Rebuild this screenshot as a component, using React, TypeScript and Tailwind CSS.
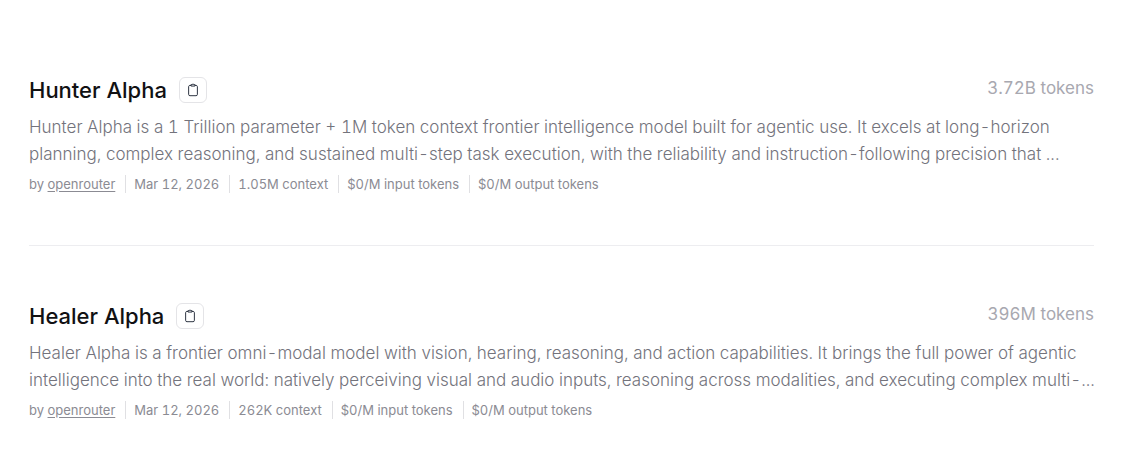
import { HiOutlineClipboard } from 'react-icons/hi2'

interface Model {
	name: string
	slug: string
	usage: string
	description: string
	date: string
	specs: string[]
}

const models: Model[] = [
	{
		name: 'Hunter Alpha',
		slug: 'hunter-alpha',
		usage: '3.72B tokens',
		description:
			'Hunter Alpha is a 1 Trillion parameter + 1M token context frontier intelligence model built for agentic use. It excels at long-horizon planning, complex reasoning, and sustained multi-step task execution, with the reliability and instruction-following precision that ...',
		date: 'Mar 12, 2026',
		specs: ['1.05M context', '$0/M input tokens', '$0/M output tokens'],
	},
	{
		name: 'Healer Alpha',
		slug: 'healer-alpha',
		usage: '396M tokens',
		description:
			'Healer Alpha is a frontier omni-modal model with vision, hearing, reasoning, and action capabilities. It brings the full power of agentic intelligence into the real world: natively perceiving visual and audio inputs, reasoning across modalities, and executing complex multi-...',
		date: 'Mar 12, 2026',
		specs: ['262K context', '$0/M input tokens', '$0/M output tokens'],
	},
]

function ModelItem({ model }: { model: Model }) {
	return (
		<li className="pt-[54px] pb-[52px]">
			<div className="flex items-start justify-between">
				<div className="flex items-center gap-3">
					<h2 className="text-[22px] leading-8 font-medium text-[#111113]">
						<a href={`#${model.slug}`}>{model.name}</a>
					</h2>
					<button
						type="button"
						aria-label="Copy model ID"
						className="flex h-[26px] w-7 items-center justify-center rounded-md border border-[#e4e4e7] text-gray-900"
					>
						<HiOutlineClipboard size={14} />
					</button>
				</div>
				<span className="text-[17px] leading-7 text-[#a8a8b0]">{model.usage}</span>
			</div>
			<p className="-mr-4 mt-2 text-[17px] leading-[27px] font-light text-[#73737c]">{model.description}</p>
			<div className="mt-[7px] flex items-center text-[13px] leading-[18px] text-[#8b8b93]">
				<span className="pr-2.5">
					by <a href="#openrouter" className="underline underline-offset-2">openrouter</a>
				</span>
				{[model.date, ...model.specs].map((item) => (
					<span key={item} className="border-l border-[#e0e0e3] pr-2.5 pl-2">{item}</span>
				))}
			</div>
		</li>
	)
}

export default function App() {
	return (
		<main className="bg-white pt-5 pr-[41px] pl-[29px] font-[Inter,sans-serif] tabular-nums">
			<ul className="divide-y divide-[#ededf0]">
				{models.map((model) => (
					<ModelItem key={model.slug} model={model} />
				))}
			</ul>
		</main>
	)
}
